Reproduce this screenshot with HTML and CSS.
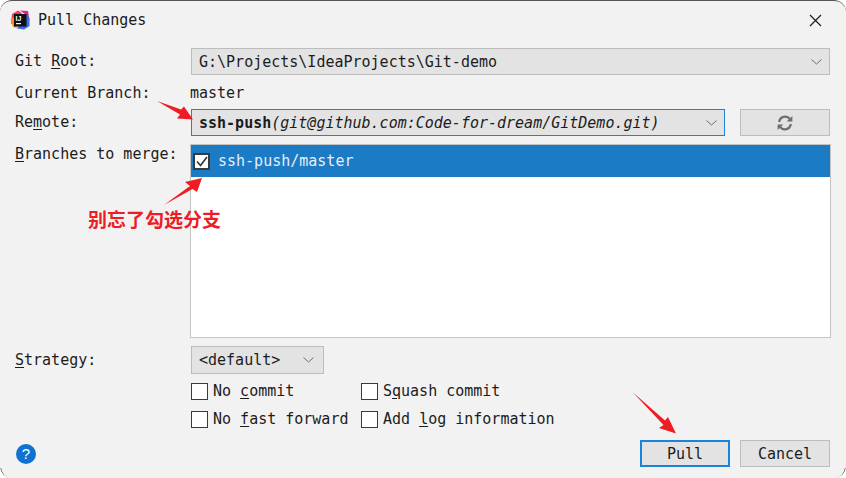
FILE: index.html
```html
<!DOCTYPE html>
<html lang="en">
<head>
  <meta charset="UTF-8" />
  <meta name="viewport" content="width=device-width, initial-scale=1.0" />
  <title>Pull Changes</title>
  <link rel="stylesheet" href="styles.css">
</head>
<body>
  <div class="dialog">
    <div class="titlebar">
      <svg class="app-icon" width="20" height="20" viewBox="0 0 20 20">
        <path d="M2 4 L8 0.5 L12 3 L6 12 L1 14 Z" fill="#f0386b"/>
        <path d="M0.5 9 L5 7 L7 18 L3 17 Z" fill="#ff8a1f"/>
        <path d="M10 0.5 L18 1 L19.5 10 L15 4 Z" fill="#ea1e7a"/>
        <path d="M16 3 L19.5 8 L19.5 16 L14 19.5 L7 18.5 Z" fill="#3a6cf0"/>
        <rect x="4" y="4" width="12.5" height="12.5" fill="#111"/>
        <rect x="6" y="13" width="5" height="1.2" fill="#fff"/>
        <text class="app-icon-text" x="5.6" y="10.6">IJ</text>
      </svg>
      <span class="title">Pull Changes</span>
      <svg class="close" width="13" height="13" viewBox="0 0 13 13">
        <path d="M1 1 L12 12 M12 1 L1 12" stroke="#1c1c1c" stroke-width="1.2" fill="none"/>
      </svg>
    </div>

    <div class="form">
      <label class="row-label">Git <u>R</u>oot:</label>
      <div class="combo combo-root">
        <span>G:\Projects\IdeaProjects\Git-demo</span>
        <svg class="chev" width="11" height="6" viewBox="0 0 11 6"><path d="M0.5 0.5 L5.5 5 L10.5 0.5" stroke="#6e6e6e" fill="none"/></svg>
      </div>

      <label class="row-label label-current">Current Branch:</label>
      <div class="branch">master</div>

      <label class="row-label">Re<u>m</u>ote:</label>
      <div class="remote-row">
        <div class="combo combo-remote">
          <span><b>ssh-push</b><i>(git@github.com:Code-for-dream/GitDemo.git)</i></span>
          <svg class="chev" width="11" height="6" viewBox="0 0 11 6"><path d="M0.5 0.5 L5.5 5 L10.5 0.5" stroke="#6e6e6e" fill="none"/></svg>
        </div>
        <button class="btn btn-refresh">
          <svg width="16" height="16" viewBox="0 0 16 16" fill="none">
            <path d="M2.2 7 A6 6 0 0 1 13 4.2" stroke="#6e6e6e" stroke-width="2.2"/>
            <path d="M9.6 6.4 L15.4 6.4 L15.4 1 Z" fill="#6e6e6e"/>
            <path d="M13.8 9 A6 6 0 0 1 3 11.8" stroke="#6e6e6e" stroke-width="2.2"/>
            <path d="M6.4 9.6 L0.6 9.6 L0.6 15 Z" fill="#6e6e6e"/>
          </svg>
        </button>
      </div>

      <label class="row-label label-branches"><u>B</u>ranches to merge:</label>
      <div class="list">
        <div class="list-row">
          <span class="check check-on">
            <svg width="12" height="11" viewBox="0 0 12 11"><path d="M1 5.5 L4.5 9.5 L11 1" stroke="#333" stroke-width="1.6" fill="none"/></svg>
          </span>
          <span>ssh-push/master</span>
        </div>
      </div>

      <label class="row-label"><u>S</u>trategy:</label>
      <div class="combo combo-strategy">
        <span>&lt;default&gt;</span>
        <svg class="chev" width="11" height="6" viewBox="0 0 11 6"><path d="M0.5 0.5 L5.5 5 L10.5 0.5" stroke="#6e6e6e" fill="none"/></svg>
      </div>

      <div class="options">
        <div class="option"><span class="check"></span><span>No <u>c</u>ommit</span></div>
        <div class="option"><span class="check"></span><span>S<u>q</u>uash commit</span></div>
        <div class="option"><span class="check"></span><span>No <u>f</u>ast forward</span></div>
        <div class="option"><span class="check"></span><span>Add <u>l</u>og information</span></div>
      </div>
    </div>

    <div class="footer">
      <span class="help">?</span>
      <div class="footer-btns">
        <button class="btn btn-default">Pull</button>
        <button class="btn">Cancel</button>
      </div>
    </div>

    <!-- red annotations drawn on top of the screenshot, plus the window's bottom corners -->
    <svg class="marks" width="846" height="478" viewBox="0 0 846 478">
      <path d="M0.5 468 Q2 476 10 479 M845.5 468 Q844 476 836 479" stroke="#555" fill="none"/>
      <path d="M157 101 L181 109.5 L184 106.5 L193 119.5 L177 118.5 L180 114.5 Z" fill="#f01c24"/>
      <path d="M164 205 L190 186 L185 182 L202 178 L197 192 L192.5 189 Z" fill="#f01c24"/>
      <path d="M632.5 392 L665 420.5 L668 417 L676 433.5 L659 428 L663.5 425 Z" fill="#f01c24"/>
    </svg>
    <div class="note">别忘了勾选分支</div>
  </div>
</body>
</html>
```

FILE: styles.css
```css
* { box-sizing: border-box; }
html, body { margin: 0; padding: 0; background: #fff; }
body { font-family: "DejaVu Sans Mono", "Liberation Mono", monospace; font-size: 15px; color: #1c1c1c; }
u { text-underline-offset: 2px; }

.dialog { position: relative; width: 846px; height: 478px; background: #f2f2f2; border-top: 1px solid #555; border-radius: 12px; overflow: hidden; }

.titlebar { display: flex; align-items: center; height: 38px; padding: 0 24px 0 10px; }
.app-icon { margin-right: 8px; }
.app-icon-text { font-family: "Liberation Sans", sans-serif; font-size: 7px; font-weight: 700; fill: #fff; }
.title { flex: 1; }

.form { display: grid; grid-template-columns: 176px 639px; padding: 9px 0 0 15px; align-items: center; }
.row-label { line-height: 27px; }
.label-current { padding-top: 2px; }
.label-branches { align-self: start; margin-top: 8px; line-height: 20px; }

.combo { display: flex; align-items: center; justify-content: space-between; height: 27px; padding: 0 7px 0 7px; background: #e3e3e3; border: 1px solid #bdbdbd; }
.chev { flex: none; }
.branch { height: 34px; line-height: 36px; margin-left: -1px; }
.remote-row { display: flex; gap: 15px; height: 27px; }
.combo-remote { width: 534px; border: 1px solid #1a83dc; }
.combo-strategy { width: 133px; height: 28px; padding-right: 9px; }

.btn { font: inherit; color: inherit; height: 27px; width: 90px; padding: 0; background: #e3e3e3; border: 1px solid #bdbdbd; }
.btn-refresh { display: flex; align-items: center; justify-content: center; }
.btn-default { border: 2px solid #1a83dc; }

.list { height: 194px; width: 641px; margin: 8px 0; margin-left: -1px; background: #fff; border: 1px solid #c4c4c4; }
.list-row { display: flex; align-items: center; gap: 8px; height: 32px; padding-left: 2px; background: #1b7bc4; color: #e6eef6; }
.check { display: inline-flex; align-items: center; justify-content: center; width: 17px; height: 17px; background: #fff; border: 1px solid #3a3a3a; }
.check-on { border-width: 2px; }

.options { grid-column: 2; display: grid; grid-template-columns: 170px auto; row-gap: 8px; margin-top: 7px; }
.option { display: flex; align-items: center; height: 20px; }
.option .check { margin-right: 5px; }

.footer { display: flex; justify-content: space-between; align-items: center; padding: 0 16px; position: absolute; left: 0; right: 0; bottom: 11px; }
.help { display: block; width: 20px; height: 20px; border-radius: 50%; background: #0f72d3; color: #fff; font-family: "Liberation Sans", sans-serif; font-size: 15px; line-height: 20px; text-align: center; }
.footer-btns { display: flex; gap: 10px; }

.marks { position: absolute; left: 0; top: -1px; pointer-events: none; }
.note { position: absolute; left: 88px; top: 206px; font-family: "Noto Sans CJK SC", sans-serif; font-weight: 700; font-size: 19px; line-height: 24px; color: #ee1c25; }
```
